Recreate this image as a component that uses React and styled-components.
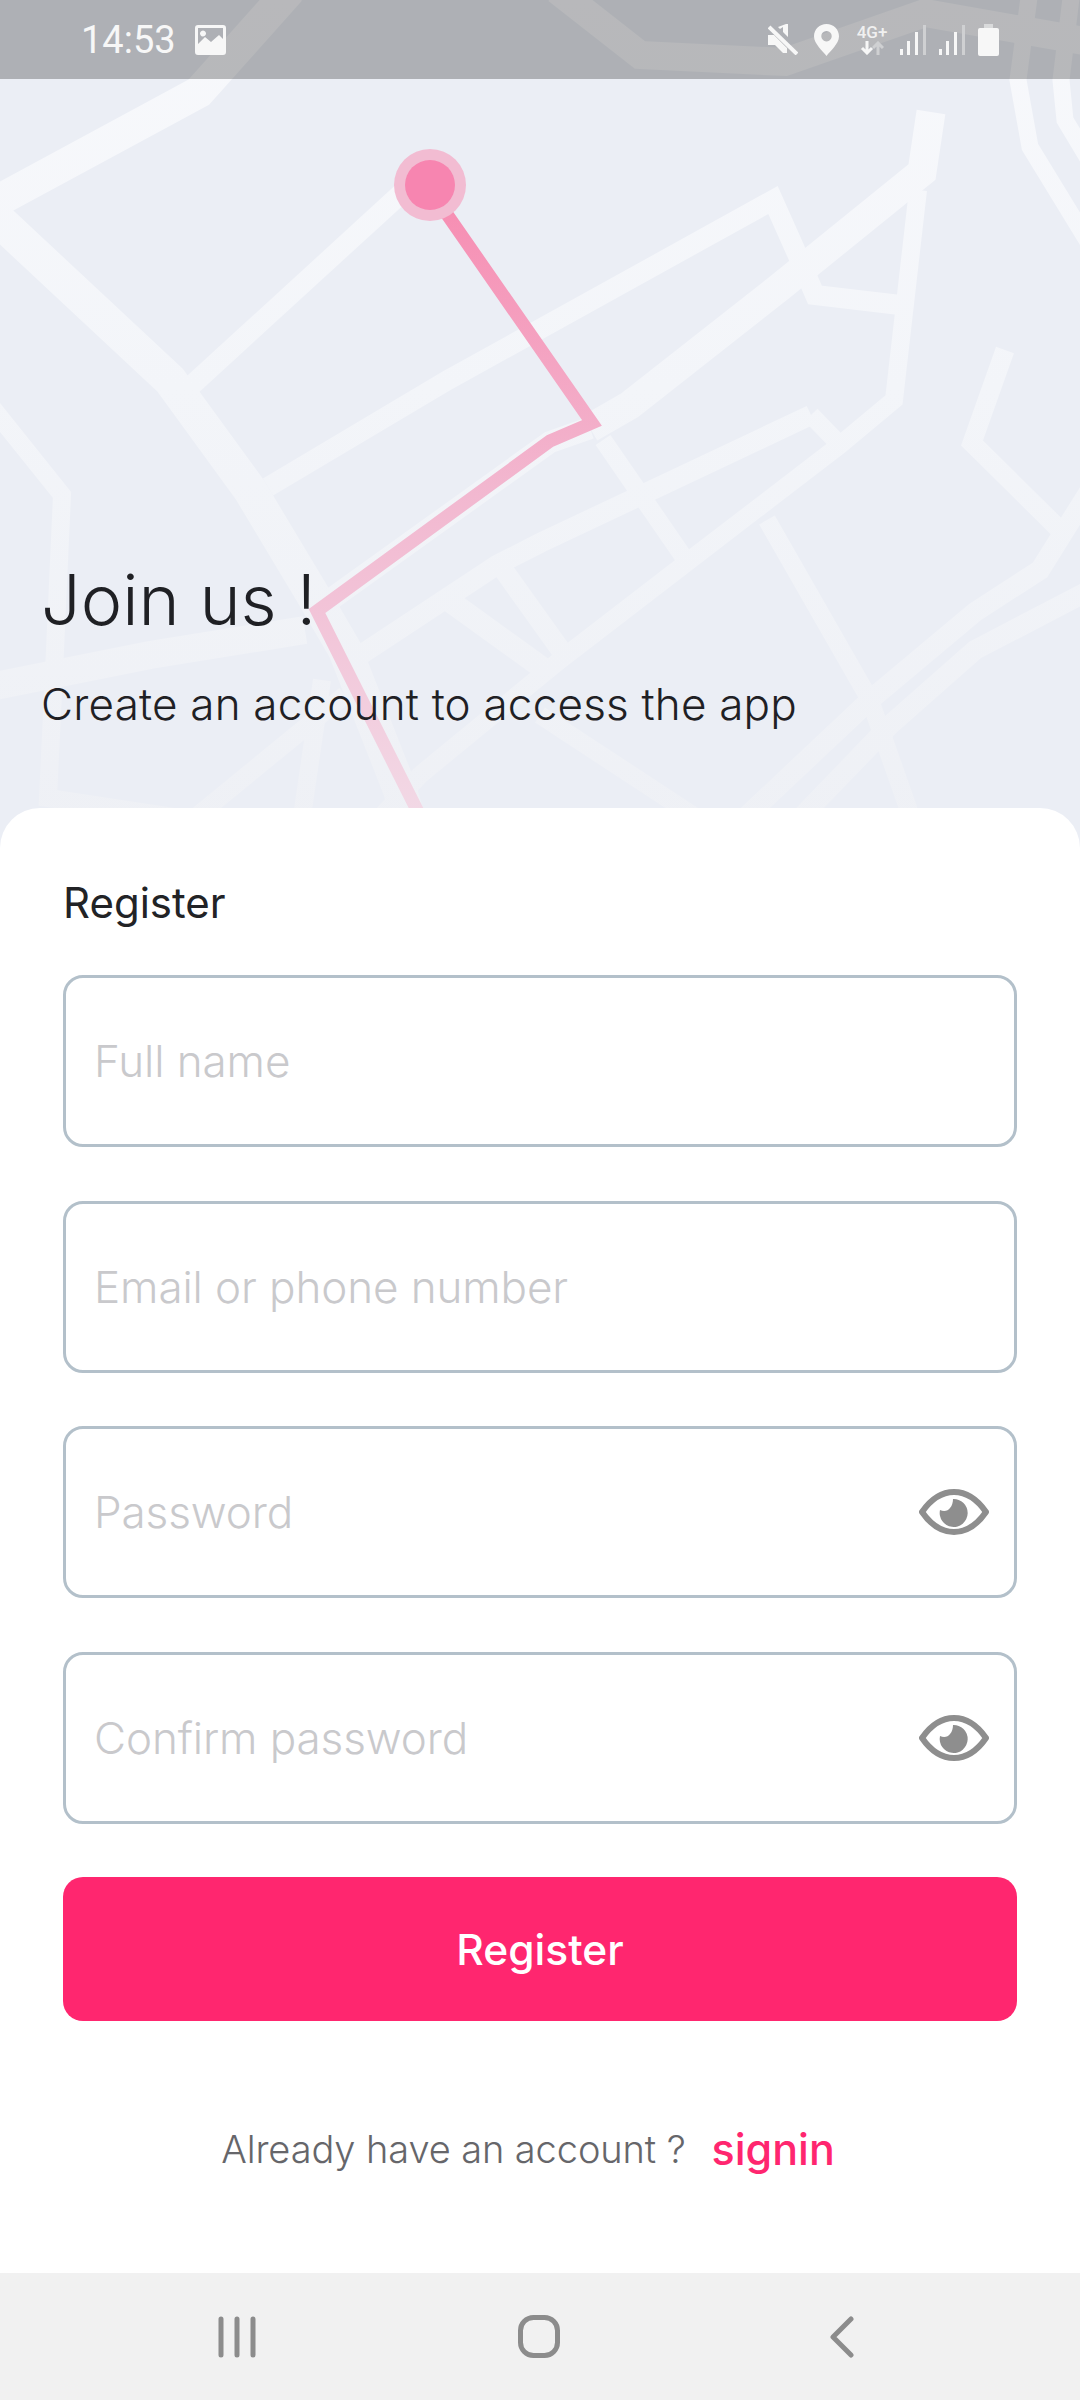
import React from "react";
import styled, { createGlobalStyle } from "styled-components";

const GlobalStyle = createGlobalStyle`
  html, body {
    margin: 0;
    background: #ebeef5;
    font-family: Inter, "Noto Sans", sans-serif;
  }
  * { box-sizing: border-box; }
`;

const Screen = styled.div`
  position: relative;
  width: 1080px;
  height: 2400px;
  overflow: hidden;
  display: flex;
  flex-direction: column;
`;

const MapArt = styled.svg`
  position: absolute;
  top: 0;
  left: 0;
`;

const StatusBar = styled.div`
  position: relative;
  height: 79px;
  flex: none;
  background: rgba(0, 0, 0, 0.26);
  display: flex;
  align-items: center;
  justify-content: space-between;
  padding: 0 81px 0 81px;
  color: #f7f7f7;
`;

const StatusGroup = styled.div`
  display: flex;
  align-items: center;
  gap: ${(p) => p.$gap}px;
`;

const Time = styled.span`
  font-family: Roboto, sans-serif;
  font-size: 38px;
  line-height: 1;
`;

const NetType = styled.div`
  display: flex;
  flex-direction: column;
  align-items: center;
  width: 32px;
  font-family: Roboto, sans-serif;
  font-size: 17px;
  font-weight: 500;
  line-height: 17px;
  color: #f0f0f0;
`;

const Hero = styled.header`
  position: relative;
  height: 729px;
  flex: none;
  padding: 481px 41px 0;
  color: #1f2024;
`;

const Title = styled.h1`
  margin: 0;
  font-size: 70px;
  font-weight: 300;
  line-height: 80px;
`;

const Subtitle = styled.p`
  margin: 39px 0 0;
  font-size: 44px;
  font-weight: 300;
  line-height: 50px;
  letter-spacing: 0.2px;
`;

const Card = styled.main`
  position: relative;
  flex: 1;
  background: #fff;
  border-radius: 40px 40px 0 0;
  padding: 70px 63px 0;
  display: flex;
  flex-direction: column;
`;

const SectionLabel = styled.h2`
  margin: 0 0 47px;
  font-size: 42px;
  font-weight: 400;
  line-height: 50px;
  color: #222326;
`;

const Form = styled.form`
  display: flex;
  flex-direction: column;
  gap: 53.5px;
`;

const Field = styled.label`
  height: 172px;
  display: flex;
  align-items: center;
  padding: 0 25px 0 28px;
  border: 3px solid #b3c0ca;
  border-radius: 20px;
`;

const Input = styled.input`
  flex: 1;
  min-width: 0;
  border: 0;
  outline: 0;
  padding: 0;
  background: transparent;
  font-family: inherit;
  font-size: 44px;
  font-weight: 300;
  letter-spacing: -0.1px;
  color: #222;

  &::placeholder {
    color: #c9c9cc;
    opacity: 1;
  }
`;

const SubmitButton = styled.button`
  height: 144px;
  border: 0;
  border-radius: 20px;
  background: #ff266f;
  color: #fff;
  font-family: inherit;
  font-size: 42.5px;
  font-weight: 500;
`;

const Footer = styled.p`
  margin: 98px 0 0;
  display: flex;
  justify-content: center;
  align-items: center;
  gap: 26px;
  padding-right: 24px;
  font-size: 38px;
  letter-spacing: -0.1px;
  line-height: 60px;
  font-weight: 300;
  color: #66666a;
`;

const SignIn = styled.a`
  font-size: 43px;
  font-weight: 500;
  letter-spacing: 0;
  color: #ff266f;
`;

const NavBar = styled.nav`
  position: relative;
  height: 127px;
  flex: none;
  background: #f1f1f1;
  display: grid;
  grid-template-columns: 300px 312px auto;
  align-items: center;
  padding-left: 218px;
`;

const roads = [
  // wide
  { w: 32, d: "M290 -10 L199 92 L-10 205" },
  { w: 34, d: "M-10 212 L170 380 L250 490 L310 590 L345 650 L400 790 L420 860" },
  { w: 29, d: "M931 112 L922 172 L780 287 L630 405 L590 428" },
  { w: 28, d: "M557 -10 L640 55 L785 62 L925 13 L1090 42" },
  { w: 28, d: "M-10 687 L150 655 L305 630" },
  // streets
  { w: 20, d: "M405 190 L192 385" },
  { w: 20, d: "M268 487 L448 380 L773 200 L802 265 L815 295 L900 305" },
  { w: 18, d: "M918 190 L894 400 L840 445 L690 560 L560 660 L420 775 L340 860" },
  { w: 20, d: "M811 415 L540 543 L497 565 L362 654" },
  { w: 18, d: "M811 415 L842 447" },
  { w: 22, d: "M590 428 L550 442 L316 610" },
  { w: 18, d: "M603 440 L687 562" },
  { w: 20, d: "M500 565 L565 656" },
  { w: 22, d: "M451 602 L548 672" },
  { w: 18, d: "M767 520 L870 700 L908 808 L920 860" },
  { w: 20, d: "M1090 490 L1040 570 L975 612 L870 700 L700 860" },
  { w: 20, d: "M1090 590 L975 650 L890 725 L760 860" },
  { w: 19, d: "M1005 350 L972 443 L1060 530" },
  { w: 17, d: "M1030 -10 L1018 80 L1030 147 L1090 245" },
  { w: 17, d: "M1072 -10 L1061 80 L1065 120 L1095 170" },
  { w: 18, d: "M-10 405 L62 495 L55 650 L48 798 L180 818" },
  { w: 18, d: "M180 830 L345 695" },
  { w: 18, d: "M300 830 L322 680" },
  { w: 18, d: "M540 715 L700 820" },
];

function RouteMap() {
  return (
    <MapArt width="1080" height="860" viewBox="0 0 1080 860" fill="none">
      <defs>
        <linearGradient id="road" gradientUnits="userSpaceOnUse" x1="0" y1="0" x2="0" y2="860">
          <stop offset="0" stopColor="#f8f9fc" />
          <stop offset="0.45" stopColor="#f3f5f9" />
          <stop offset="1" stopColor="#eef0f5" />
        </linearGradient>
        <linearGradient id="route" gradientUnits="userSpaceOnUse" x1="0" y1="180" x2="0" y2="810">
          <stop offset="0" stopColor="#f78ab0" />
          <stop offset="0.5" stopColor="#f2b8d0" />
          <stop offset="1" stopColor="#f2d8e5" />
        </linearGradient>
      </defs>
      <g stroke="url(#road)">
        {roads.map((r) => (
          <path key={r.d} d={r.d} strokeWidth={r.w} />
        ))}
      </g>
      <path
        d="M437 200 L592 423 L550 441 L317 611 L418 812"
        stroke="url(#route)"
        strokeWidth="13"
      />
      <circle cx="430" cy="185" r="36" fill="#f2bcd2" />
      <circle cx="430" cy="185" r="25" fill="#f785b0" />
    </MapArt>
  );
}

const ImageIcon = () => (
  <svg width="31" height="30" viewBox="0 0 31 30">
    <path
      fillRule="evenodd"
      fill="#f7f7f7"
      d="M3 0H28a3 3 0 0 1 3 3V27a3 3 0 0 1-3 3H3a3 3 0 0 1-3-3V3a3 3 0 0 1 3-3ZM3 3V19L10 12L16 17L24 10L28 14V3ZM8 5.5a3 3 0 1 0 .01 0Z"
    />
  </svg>
);

const MuteIcon = () => (
  <svg width="30" height="31" viewBox="0 0 30 31">
    <path fill="#f7f7f7" d="M0 11H6L19 24V29H15L7 21H0ZM18 0H20V13L15 8V3L12 5L10 3Z" />
    <path d="M1 3L29 30" stroke="#f7f7f7" strokeWidth="4" />
  </svg>
);

const PinIcon = () => (
  <svg width="25" height="32" viewBox="0 0 25 32">
    <path
      fillRule="evenodd"
      fill="#f7f7f7"
      d="M12.5 0C19.4 0 25 5.4 25 12.2C25 20 16 27 12.5 32C9 27 0 20 0 12.2C0 5.4 5.6 0 12.5 0ZM12.5 7a5.2 5.2 0 1 0 .01 0Z"
    />
  </svg>
);

const DataArrows = () => (
  <svg width="24" height="14" viewBox="0 0 24 14">
    <path d="M7 0V12M2 7L7 12L12 7" stroke="#f7f7f7" strokeWidth="3" fill="none" />
    <path d="M18 14V2M13 7L18 2L23 7" stroke="#cfd0d2" strokeWidth="3" fill="none" />
  </svg>
);

const SignalIcon = () => (
  <svg width="27" height="30" viewBox="0 0 27 30">
    <rect x="0" y="24" width="3" height="6" fill="#f7f7f7" />
    <rect x="7" y="16" width="3" height="14" fill="#f7f7f7" />
    <rect x="15" y="7" width="3" height="23" fill="#f7f7f7" />
    <rect x="23" y="0" width="3" height="30" fill="#cfd0d2" />
  </svg>
);

const BatteryIcon = () => (
  <svg width="21" height="32" viewBox="0 0 21 32">
    <path fill="#d9dadb" d="M6 0H15V4H6Z" />
    <path fill="#f7f7f7" d="M2 4H19a2 2 0 0 1 2 2V30a2 2 0 0 1-2 2H2a2 2 0 0 1-2-2V6a2 2 0 0 1 2-2Z" />
  </svg>
);

const EyeIcon = () => (
  <svg width="70" height="46" viewBox="0 0 70 46" fill="none">
    <path
      d="M3 23C12 10 23 3 35 3C47 3 58 10 67 23C58 36 47 43 35 43C23 43 12 36 3 23Z"
      stroke="#8e8e8e"
      strokeWidth="6"
      strokeLinejoin="round"
    />
    <path
      fill="#8e8e8e"
      d="M34 10A14 14 0 1 1 21 21C25 23 29 22 31 19C33 17 34 13 34 10Z"
    />
  </svg>
);

const MenuIcon = () => (
  <svg width="38" height="42" viewBox="0 0 38 42" stroke="#8c8c8c" strokeWidth="5" strokeLinecap="round">
    <path d="M3 3V39M19 3V39M35 3V39" />
  </svg>
);

const HomeIcon = () => (
  <svg width="42" height="43" viewBox="0 0 42 43" fill="none">
    <rect x="2.5" y="2.5" width="37" height="38" rx="13" stroke="#8c8c8c" strokeWidth="5" />
  </svg>
);

const BackIcon = () => (
  <svg width="24" height="42" viewBox="0 0 24 42" fill="none">
    <path d="M21 3L3 21L21 39" stroke="#8c8c8c" strokeWidth="5" strokeLinecap="round" strokeLinejoin="round" />
  </svg>
);

const fields = [
  { placeholder: "Full name", type: "text" },
  { placeholder: "Email or phone number", type: "text" },
  { placeholder: "Password", type: "password", eye: true },
  { placeholder: "Confirm password", type: "password", eye: true },
];

export default function App() {
  return (
    <>
      <GlobalStyle />
      <Screen>
        <RouteMap />
        <StatusBar>
          <StatusGroup $gap={19}>
            <Time>14:53</Time>
            <ImageIcon />
          </StatusGroup>
          <StatusGroup $gap={17}>
            <StatusGroup $gap={16}>
              <MuteIcon />
              <PinIcon />
            </StatusGroup>
            <StatusGroup $gap={12}>
              <NetType>
                4G+
                <DataArrows />
              </NetType>
              <SignalIcon />
              <SignalIcon />
              <BatteryIcon />
            </StatusGroup>
          </StatusGroup>
        </StatusBar>
        <Hero>
          <Title>Join us !</Title>
          <Subtitle>Create an account to access the app</Subtitle>
        </Hero>
        <Card>
          <SectionLabel>Register</SectionLabel>
          <Form>
            {fields.map((f) => (
              <Field key={f.placeholder}>
                <Input type={f.type} placeholder={f.placeholder} />
                {f.eye && <EyeIcon />}
              </Field>
            ))}
            <SubmitButton type="button">Register</SubmitButton>
          </Form>
          <Footer>
            Already have an account ?
            <SignIn>signin</SignIn>
          </Footer>
        </Card>
        <NavBar>
          <MenuIcon />
          <HomeIcon />
          <BackIcon />
        </NavBar>
      </Screen>
    </>
  );
}
